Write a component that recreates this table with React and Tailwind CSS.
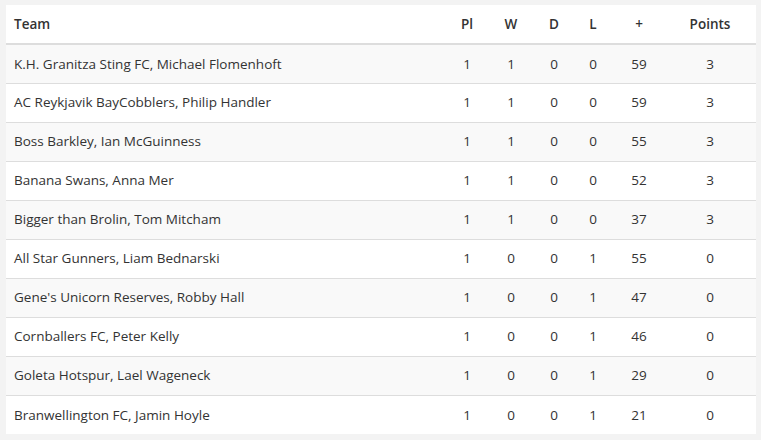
const ROWS = [
  ["K.H. Granitza Sting FC, Michael Flomenhoft", 1, 1, 0, 0, 59, 3],
  ["AC Reykjavik BayCobblers, Philip Handler", 1, 1, 0, 0, 59, 3],
  ["Boss Barkley, Ian McGuinness", 1, 1, 0, 0, 55, 3],
  ["Banana Swans, Anna Mer", 1, 1, 0, 0, 52, 3],
  ["Bigger than Brolin, Tom Mitcham", 1, 1, 0, 0, 37, 3],
  ["All Star Gunners, Liam Bednarski", 1, 0, 0, 1, 55, 0],
  ["Gene's Unicorn Reserves, Robby Hall", 1, 0, 0, 1, 47, 0],
  ["Cornballers FC, Peter Kelly", 1, 0, 0, 1, 46, 0],
  ["Goleta Hotspur, Lael Wageneck", 1, 0, 0, 1, 29, 0],
  ["Branwellington FC, Jamin Hoyle", 1, 0, 0, 1, 21, 0],
];

const HEAD = ["Pl", "W", "D", "L", "+", "Points"];

export default function App() {
  return (
    <div className="min-h-[440px] bg-[#f3f3f3] pt-[5px] pl-[6px] font-['Open_Sans',sans-serif] text-[13.5px] text-[#333]">
      <table className="w-[750px] table-fixed border-collapse bg-white">
        <colgroup>
          <col className="w-[442px]" />
          <col className="w-[38px]" />
          <col className="w-[50px]" />
          <col className="w-[36px]" />
          <col className="w-[42px]" />
          <col className="w-[50px]" />
          <col className="w-[92px]" />
        </colgroup>
        <thead>
          <tr className="h-[39px] border-b-2 border-[#ddd]">
            <th className="px-2 text-left font-semibold">Team</th>
            {HEAD.map((h) => (
              <th key={h} className="text-center font-semibold">{h}</th>
            ))}
          </tr>
        </thead>
        <tbody>
          {ROWS.map((r, i) => (
            <tr key={r[0]} className={`h-[39px] ${i > 0 ? "border-t border-[#ddd]" : ""} ${i % 2 === 0 ? "bg-[#f9f9f9]" : "bg-white"}`}>
              <td className="px-2">{r[0]}</td>
              {r.slice(1).map((v, j) => (
                <td key={j} className="text-center">{v}</td>
              ))}
            </tr>
          ))}
        </tbody>
      </table>
    </div>
  );
}
